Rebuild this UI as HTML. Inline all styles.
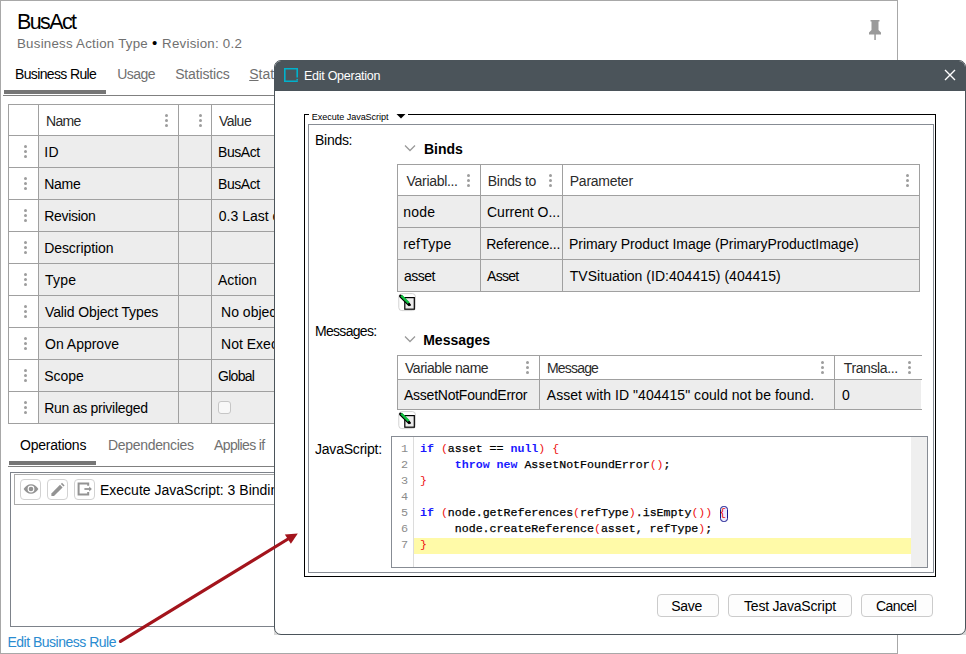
<!DOCTYPE html>
<html><head><meta charset="utf-8"><style>
*{box-sizing:border-box;margin:0;padding:0}
html,body{width:966px;height:654px;overflow:hidden;background:#fff}
body{position:relative;font-family:"Liberation Sans",sans-serif;color:#000}
.a{position:absolute}
.t{position:absolute;white-space:nowrap;line-height:1}
.code{position:absolute;font-family:"Liberation Mono",monospace;font-size:11.6px;line-height:16px;white-space:pre;color:#000;-webkit-text-stroke:0.25px currentColor}
.k{color:#1a1aff;font-weight:bold;-webkit-text-stroke:0}
.p{color:#ee1111;-webkit-text-stroke:0}
.ln{position:absolute;font-family:"Liberation Mono",monospace;font-size:11.8px;line-height:16px;color:#8c8c8c;white-space:pre;text-align:right;width:20px}
</style></head><body>
<div class="a" style="left:0px;top:0px;width:898px;height:654px;border:1px solid #a8a8a8;"></div>
<div class="t" style="left:17.00px;top:12.00px;font-size:21.5px;letter-spacing:-1.610px">BusAct</div>
<div class="t" style="left:17.00px;top:37.00px;font-size:13.3px;letter-spacing:0.240px;color:#707070">Business Action Type <span style="color:#000;font-size:15px;letter-spacing:1px;line-height:0">&#8226;</span> Revision: 0.2</div>
<svg class="a" style="left:866px;top:18px" width="18" height="24" viewBox="0 0 18 24">
<path d="M4.5 2h9v1.5h-1v8.5l2.5 2.5v2h-12v-2l2.5-2.5v-8.5h-1z" fill="#9a9a9a"/>
<rect x="8.3" y="15" width="1.5" height="7" fill="#9a9a9a"/></svg>
<div class="t" style="left:15.00px;top:67.00px;font-size:14px;letter-spacing:-0.642px">Business Rule</div>
<div class="t" style="left:117.20px;top:67.00px;font-size:14px;letter-spacing:-0.525px;color:#707070">Usage</div>
<div class="t" style="left:175.20px;top:67.00px;font-size:14px;letter-spacing:-0.156px;color:#707070">Statistics</div>
<div class="t" style="left:249.20px;top:67.00px;font-size:14px;letter-spacing:0.000px;color:#707070"><u>S</u>tatus</div>
<div class="a" style="left:4px;top:90px;width:102px;height:4px;background:#767676;"></div>
<div class="a" style="left:3px;top:95px;width:894px;height:1px;background:#808080;"></div>
<div class="a" style="left:39px;top:136px;width:261px;height:31px;background:#ededed;"></div>
<div class="a" style="left:39px;top:168px;width:261px;height:31px;background:#ededed;"></div>
<div class="a" style="left:39px;top:200px;width:261px;height:31px;background:#ededed;"></div>
<div class="a" style="left:39px;top:232px;width:261px;height:31px;background:#ededed;"></div>
<div class="a" style="left:39px;top:264px;width:261px;height:31px;background:#ededed;"></div>
<div class="a" style="left:39px;top:296px;width:261px;height:31px;background:#ededed;"></div>
<div class="a" style="left:39px;top:328px;width:261px;height:31px;background:#ededed;"></div>
<div class="a" style="left:39px;top:360px;width:261px;height:31px;background:#ededed;"></div>
<div class="a" style="left:39px;top:392px;width:261px;height:31px;background:#ededed;"></div>
<div class="a" style="left:8px;top:104px;width:293px;height:1px;background:#a0a0a0;"></div>
<div class="a" style="left:8px;top:135px;width:293px;height:1px;background:#a0a0a0;"></div>
<div class="a" style="left:8px;top:167px;width:293px;height:1px;background:#a0a0a0;"></div>
<div class="a" style="left:8px;top:199px;width:293px;height:1px;background:#a0a0a0;"></div>
<div class="a" style="left:8px;top:231px;width:293px;height:1px;background:#a0a0a0;"></div>
<div class="a" style="left:8px;top:263px;width:293px;height:1px;background:#a0a0a0;"></div>
<div class="a" style="left:8px;top:295px;width:293px;height:1px;background:#a0a0a0;"></div>
<div class="a" style="left:8px;top:327px;width:293px;height:1px;background:#a0a0a0;"></div>
<div class="a" style="left:8px;top:359px;width:293px;height:1px;background:#a0a0a0;"></div>
<div class="a" style="left:8px;top:391px;width:293px;height:1px;background:#a0a0a0;"></div>
<div class="a" style="left:8px;top:423px;width:293px;height:1px;background:#a0a0a0;"></div>
<div class="a" style="left:8px;top:104px;width:1px;height:320px;background:#a0a0a0;"></div>
<div class="a" style="left:38px;top:104px;width:1px;height:320px;background:#a0a0a0;"></div>
<div class="a" style="left:178px;top:104px;width:1px;height:320px;background:#a0a0a0;"></div>
<div class="a" style="left:211px;top:104px;width:1px;height:320px;background:#a0a0a0;"></div>
<div class="t" style="left:46.00px;top:114.00px;font-size:14px;letter-spacing:-0.700px;color:#2b2b2b">Name</div>
<div class="a" style="left:165px;top:114px;width:3px;height:3px;border-radius:50%;background:#9d9d9d"></div>
<div class="a" style="left:165px;top:119px;width:3px;height:3px;border-radius:50%;background:#9d9d9d"></div>
<div class="a" style="left:165px;top:124px;width:3px;height:3px;border-radius:50%;background:#9d9d9d"></div>
<div class="a" style="left:199px;top:114px;width:3px;height:3px;border-radius:50%;background:#9d9d9d"></div>
<div class="a" style="left:199px;top:119px;width:3px;height:3px;border-radius:50%;background:#9d9d9d"></div>
<div class="a" style="left:199px;top:124px;width:3px;height:3px;border-radius:50%;background:#9d9d9d"></div>
<div class="t" style="left:219.00px;top:114.00px;font-size:14px;letter-spacing:-0.525px;color:#2b2b2b">Value</div>
<div class="a" style="left:24px;top:145px;width:3px;height:3px;border-radius:50%;background:#9d9d9d"></div>
<div class="a" style="left:24px;top:150px;width:3px;height:3px;border-radius:50%;background:#9d9d9d"></div>
<div class="a" style="left:24px;top:155px;width:3px;height:3px;border-radius:50%;background:#9d9d9d"></div>
<div class="t" style="left:44.20px;top:145.00px;font-size:14px;letter-spacing:0.500px">ID</div>
<div class="t" style="left:218.00px;top:145.00px;font-size:14px;letter-spacing:-0.420px">BusAct</div>
<div class="a" style="left:24px;top:177px;width:3px;height:3px;border-radius:50%;background:#9d9d9d"></div>
<div class="a" style="left:24px;top:182px;width:3px;height:3px;border-radius:50%;background:#9d9d9d"></div>
<div class="a" style="left:24px;top:187px;width:3px;height:3px;border-radius:50%;background:#9d9d9d"></div>
<div class="t" style="left:44.20px;top:177.00px;font-size:14px;letter-spacing:-0.233px">Name</div>
<div class="t" style="left:218.00px;top:177.00px;font-size:14px;letter-spacing:-0.420px">BusAct</div>
<div class="a" style="left:24px;top:209px;width:3px;height:3px;border-radius:50%;background:#9d9d9d"></div>
<div class="a" style="left:24px;top:214px;width:3px;height:3px;border-radius:50%;background:#9d9d9d"></div>
<div class="a" style="left:24px;top:219px;width:3px;height:3px;border-radius:50%;background:#9d9d9d"></div>
<div class="t" style="left:44.20px;top:209.00px;font-size:14px;letter-spacing:-0.300px">Revision</div>
<div class="t" style="left:218.80px;top:209.00px;font-size:14px;letter-spacing:0.000px">0.3 Last edited</div>
<div class="a" style="left:24px;top:241px;width:3px;height:3px;border-radius:50%;background:#9d9d9d"></div>
<div class="a" style="left:24px;top:246px;width:3px;height:3px;border-radius:50%;background:#9d9d9d"></div>
<div class="a" style="left:24px;top:251px;width:3px;height:3px;border-radius:50%;background:#9d9d9d"></div>
<div class="t" style="left:44.20px;top:241.00px;font-size:14px;letter-spacing:-0.070px">Description</div>
<div class="a" style="left:24px;top:273px;width:3px;height:3px;border-radius:50%;background:#9d9d9d"></div>
<div class="a" style="left:24px;top:278px;width:3px;height:3px;border-radius:50%;background:#9d9d9d"></div>
<div class="a" style="left:24px;top:283px;width:3px;height:3px;border-radius:50%;background:#9d9d9d"></div>
<div class="t" style="left:45.00px;top:273.00px;font-size:14px;letter-spacing:0.233px">Type</div>
<div class="t" style="left:218.00px;top:273.00px;font-size:14px;letter-spacing:0.000px">Action</div>
<div class="a" style="left:24px;top:305px;width:3px;height:3px;border-radius:50%;background:#9d9d9d"></div>
<div class="a" style="left:24px;top:310px;width:3px;height:3px;border-radius:50%;background:#9d9d9d"></div>
<div class="a" style="left:24px;top:315px;width:3px;height:3px;border-radius:50%;background:#9d9d9d"></div>
<div class="t" style="left:45.00px;top:305.00px;font-size:14px;letter-spacing:-0.124px">Valid Object Types</div>
<div class="t" style="left:217.20px;top:305.00px;font-size:14px;letter-spacing:0.000px">&nbsp;No objects</div>
<div class="a" style="left:24px;top:337px;width:3px;height:3px;border-radius:50%;background:#9d9d9d"></div>
<div class="a" style="left:24px;top:342px;width:3px;height:3px;border-radius:50%;background:#9d9d9d"></div>
<div class="a" style="left:24px;top:347px;width:3px;height:3px;border-radius:50%;background:#9d9d9d"></div>
<div class="t" style="left:45.00px;top:337.00px;font-size:14px;letter-spacing:0.000px">On Approve</div>
<div class="t" style="left:217.20px;top:337.00px;font-size:14px;letter-spacing:0.000px">&nbsp;Not Executed</div>
<div class="a" style="left:24px;top:369px;width:3px;height:3px;border-radius:50%;background:#9d9d9d"></div>
<div class="a" style="left:24px;top:374px;width:3px;height:3px;border-radius:50%;background:#9d9d9d"></div>
<div class="a" style="left:24px;top:379px;width:3px;height:3px;border-radius:50%;background:#9d9d9d"></div>
<div class="t" style="left:44.20px;top:369.00px;font-size:14px;letter-spacing:0.000px">Scope</div>
<div class="t" style="left:218.00px;top:369.00px;font-size:14px;letter-spacing:-0.700px">Global</div>
<div class="a" style="left:24px;top:401px;width:3px;height:3px;border-radius:50%;background:#9d9d9d"></div>
<div class="a" style="left:24px;top:406px;width:3px;height:3px;border-radius:50%;background:#9d9d9d"></div>
<div class="a" style="left:24px;top:411px;width:3px;height:3px;border-radius:50%;background:#9d9d9d"></div>
<div class="t" style="left:44.20px;top:401.00px;font-size:14px;letter-spacing:-0.263px">Run as privileged</div>
<div class="a" style="left:218px;top:401px;width:13px;height:13px;border:1px solid #c6c6c6;border-radius:3px;background:#f8f8f8"></div>
<div class="t" style="left:20.00px;top:438.00px;font-size:14px;letter-spacing:-0.233px">Operations</div>
<div class="t" style="left:108.00px;top:438.00px;font-size:14px;letter-spacing:-0.318px;color:#707070">Dependencies</div>
<div class="t" style="left:214.00px;top:438.00px;font-size:14px;letter-spacing:-0.622px;color:#707070">Applies if</div>
<div class="a" style="left:9px;top:461px;width:87px;height:4px;background:#767676;"></div>
<div class="a" style="left:8px;top:466px;width:293px;height:1px;background:#808080;"></div>
<div class="a" style="left:10px;top:472px;width:291px;height:155px;border:1px solid #7d828a;"></div>
<div class="a" style="left:14px;top:474px;width:287px;height:31px;border:1px solid #ababab;"></div>
<div class="a" style="left:20px;top:479px;width:21px;height:21px;border:1px solid #d2d2d2;border-radius:4px"></div>
<div class="a" style="left:47px;top:479px;width:21px;height:21px;border:1px solid #d2d2d2;border-radius:4px"></div>
<div class="a" style="left:74px;top:479px;width:21px;height:21px;border:1px solid #d2d2d2;border-radius:4px"></div>
<svg class="a" style="left:21px;top:480px" width="20" height="20" viewBox="0 0 20 20">
<path d="M2.6 9C4.6 5.8 7.1 4.2 10 4.2s5.4 1.6 7.4 4.8C15.4 12.2 12.9 13.8 10 13.8S4.6 12.2 2.6 9z" fill="#939393"/>
<circle cx="10" cy="9" r="3.4" fill="#fff"/><circle cx="10" cy="9" r="2.3" fill="#939393"/></svg>
<svg class="a" style="left:48px;top:480px" width="20" height="20" viewBox="0 0 20 20">
<path d="M3.4 13.4L12 4.8 14.6 7.4 6 16 3.4 16z" fill="#939393"/><path d="M12.9 3.9L14 2.8 16.6 5.4 15.5 6.5z" fill="#939393"/></svg>
<svg class="a" style="left:75px;top:480px" width="20" height="20" viewBox="0 0 20 20">
<path d="M13.2 5.8V3.4H3.6v11.2h9.6V11.9" fill="none" stroke="#939393" stroke-width="2"/>
<path d="M9.4 9h5.6" stroke="#939393" stroke-width="1.8"/><path d="M14.2 6.4L16.9 9l-2.7 2.6z" fill="#939393"/></svg>
<div class="t" style="left:100.00px;top:483.00px;font-size:14px;letter-spacing:0.000px">Execute JavaScript: 3 Bindings</div>
<div class="t" style="left:7.40px;top:635.00px;font-size:14px;letter-spacing:-0.494px;color:#2a8bd0">Edit Business Rule</div>
<div class="a" style="left:274px;top:627px;width:8px;height:8px;background:#d8d8d8;"></div>
<div class="a" style="left:958px;top:627px;width:8px;height:8px;background:#d8d8d8;"></div>
<div class="a" style="left:274px;top:60px;width:692px;height:575px;border:1px solid #4b545a;border-radius:7px;background:#fff;overflow:hidden"><div class="a" style="left:0;top:0;width:692px;height:30px;background:#4b545a"></div></div>
<svg class="a" style="left:283px;top:67px" width="17" height="17" viewBox="0 0 17 17">
<path d="M14.2 10.6V1.8H1.8V14.2H14.8" fill="none" stroke="#00b2cc" stroke-width="1.6"/>
<rect x="13.4" y="11.9" width="1.6" height="1.5" fill="#00b2cc"/></svg>
<div class="t" style="left:304.00px;top:70.00px;font-size:12.5px;letter-spacing:-0.269px;color:#fff">Edit Operation</div>
<svg class="a" style="left:943px;top:68px" width="14" height="14" viewBox="0 0 14 14">
<path d="M2 2L12 12M12 2L2 12" stroke="#fff" stroke-width="1.4"/></svg>
<div class="a" style="left:304px;top:114px;width:632px;height:463px;border:1px solid #000;"></div>
<div class="a" style="left:309px;top:110px;width:99px;height:8px;background:#fff;"></div>
<div class="t" style="left:311.80px;top:113.00px;font-size:9.05px;letter-spacing:-0.041px">Execute JavaScript</div>
<svg class="a" style="left:396px;top:114px" width="10" height="5" viewBox="0 0 10 5"><path d="M0.5 0h9L5 4.5z" fill="#000"/></svg>
<div class="a" style="left:308px;top:124px;width:626px;height:449px;border:1px solid #878c94;"></div>
<div class="t" style="left:315.00px;top:133.00px;font-size:14px;letter-spacing:-0.280px">Binds:</div>
<svg class="a" style="left:404px;top:144px" width="12" height="8" viewBox="0 0 12 8"><path d="M1 1.5L6 6.5 11 1.5" fill="none" stroke="#9a9a9a" stroke-width="1.3"/></svg>
<div class="t" style="left:424.00px;top:142.00px;font-size:14px;letter-spacing:0.000px;font-weight:bold">Binds</div>
<div class="a" style="left:398px;top:196px;width:521px;height:31px;background:#ededed;"></div>
<div class="a" style="left:398px;top:228px;width:521px;height:31px;background:#ededed;"></div>
<div class="a" style="left:398px;top:260px;width:521px;height:31px;background:#ededed;"></div>
<div class="a" style="left:397px;top:164px;width:523px;height:1px;background:#a0a0a0;"></div>
<div class="a" style="left:397px;top:195px;width:523px;height:1px;background:#a0a0a0;"></div>
<div class="a" style="left:397px;top:227px;width:523px;height:1px;background:#a0a0a0;"></div>
<div class="a" style="left:397px;top:259px;width:523px;height:1px;background:#a0a0a0;"></div>
<div class="a" style="left:397px;top:291px;width:523px;height:1px;background:#a0a0a0;"></div>
<div class="a" style="left:397px;top:164px;width:1px;height:128px;background:#a0a0a0;"></div>
<div class="a" style="left:480px;top:164px;width:1px;height:128px;background:#a0a0a0;"></div>
<div class="a" style="left:562px;top:164px;width:1px;height:128px;background:#a0a0a0;"></div>
<div class="a" style="left:919px;top:164px;width:1px;height:128px;background:#a0a0a0;"></div>
<div class="t" style="left:406.60px;top:174.00px;font-size:14px;letter-spacing:-0.311px;color:#2b2b2b">Variabl...</div>
<div class="a" style="left:467px;top:174px;width:3px;height:3px;border-radius:50%;background:#9d9d9d"></div>
<div class="a" style="left:467px;top:179px;width:3px;height:3px;border-radius:50%;background:#9d9d9d"></div>
<div class="a" style="left:467px;top:184px;width:3px;height:3px;border-radius:50%;background:#9d9d9d"></div>
<div class="t" style="left:487.80px;top:174.00px;font-size:14px;letter-spacing:-0.300px;color:#2b2b2b">Binds to</div>
<div class="a" style="left:549px;top:174px;width:3px;height:3px;border-radius:50%;background:#9d9d9d"></div>
<div class="a" style="left:549px;top:179px;width:3px;height:3px;border-radius:50%;background:#9d9d9d"></div>
<div class="a" style="left:549px;top:184px;width:3px;height:3px;border-radius:50%;background:#9d9d9d"></div>
<div class="t" style="left:569.80px;top:174.00px;font-size:14px;letter-spacing:-0.262px;color:#2b2b2b">Parameter</div>
<div class="a" style="left:906px;top:174px;width:3px;height:3px;border-radius:50%;background:#9d9d9d"></div>
<div class="a" style="left:906px;top:179px;width:3px;height:3px;border-radius:50%;background:#9d9d9d"></div>
<div class="a" style="left:906px;top:184px;width:3px;height:3px;border-radius:50%;background:#9d9d9d"></div>
<div class="t" style="left:403.20px;top:205.00px;font-size:14px;letter-spacing:0.233px">node</div>
<div class="t" style="left:487.00px;top:205.00px;font-size:14px;letter-spacing:0.000px">Current O...</div>
<div class="t" style="left:403.20px;top:237.00px;font-size:14px;letter-spacing:0.233px">refType</div>
<div class="t" style="left:486.20px;top:237.00px;font-size:14px;letter-spacing:-0.191px">Reference...</div>
<div class="t" style="left:569.00px;top:237.00px;font-size:14px;letter-spacing:-0.050px">Primary Product Image (PrimaryProductImage)</div>
<div class="t" style="left:404.00px;top:269.00px;font-size:14px;letter-spacing:-0.525px">asset</div>
<div class="t" style="left:487.00px;top:269.00px;font-size:14px;letter-spacing:-0.700px">Asset</div>
<div class="t" style="left:569.80px;top:269.00px;font-size:14px;letter-spacing:0.023px">TVSituation (ID:404415) (404415)</div>
<svg class="a" style="left:398px;top:293px" width="19" height="19" viewBox="0 0 19 19">
<rect x="0.8" y="0.6" width="16.6" height="17" rx="3" fill="#fff" stroke="#d2d2d2"/>
<rect x="6.8" y="4.6" width="9.5" height="11.6" fill="#ececec" stroke="#000" stroke-width="1.2"/>
<path d="M2.6 3.1L11 11.5" stroke="#000" stroke-width="3.1" stroke-linecap="round"/>
<path d="M3.2 2.6L10.8 10.2" stroke="#10c040" stroke-width="2.4"/>
<path d="M10.5 10.5L12.6 12.6" stroke="#000" stroke-width="1.4"/></svg>
<div class="t" style="left:315.00px;top:324.00px;font-size:14px;letter-spacing:-0.700px">Messages:</div>
<svg class="a" style="left:404px;top:335px" width="12" height="8" viewBox="0 0 12 8"><path d="M1 1.5L6 6.5 11 1.5" fill="none" stroke="#9a9a9a" stroke-width="1.3"/></svg>
<div class="t" style="left:423.20px;top:333.00px;font-size:14px;letter-spacing:0.000px;font-weight:bold">Messages</div>
<div class="a" style="left:398px;top:380px;width:523px;height:29px;background:#ededed;"></div>
<div class="a" style="left:397px;top:355px;width:525px;height:1px;background:#a0a0a0;"></div>
<div class="a" style="left:397px;top:379px;width:525px;height:1px;background:#a0a0a0;"></div>
<div class="a" style="left:397px;top:409px;width:525px;height:1px;background:#a0a0a0;"></div>
<div class="a" style="left:397px;top:355px;width:1px;height:55px;background:#a0a0a0;"></div>
<div class="a" style="left:539px;top:355px;width:1px;height:55px;background:#a0a0a0;"></div>
<div class="a" style="left:834px;top:355px;width:1px;height:55px;background:#a0a0a0;"></div>
<div class="t" style="left:405.00px;top:361.00px;font-size:14px;letter-spacing:-0.467px;color:#2b2b2b">Variable name</div>
<div class="a" style="left:526px;top:361px;width:3px;height:3px;border-radius:50%;background:#9d9d9d"></div>
<div class="a" style="left:526px;top:366px;width:3px;height:3px;border-radius:50%;background:#9d9d9d"></div>
<div class="a" style="left:526px;top:371px;width:3px;height:3px;border-radius:50%;background:#9d9d9d"></div>
<div class="t" style="left:547.00px;top:361.00px;font-size:14px;letter-spacing:-0.817px;color:#2b2b2b">Message</div>
<div class="a" style="left:821px;top:361px;width:3px;height:3px;border-radius:50%;background:#9d9d9d"></div>
<div class="a" style="left:821px;top:366px;width:3px;height:3px;border-radius:50%;background:#9d9d9d"></div>
<div class="a" style="left:821px;top:371px;width:3px;height:3px;border-radius:50%;background:#9d9d9d"></div>
<div class="t" style="left:843.80px;top:361.00px;font-size:14px;letter-spacing:-0.389px;color:#2b2b2b">Transla...</div>
<div class="a" style="left:908px;top:361px;width:3px;height:3px;border-radius:50%;background:#9d9d9d"></div>
<div class="a" style="left:908px;top:366px;width:3px;height:3px;border-radius:50%;background:#9d9d9d"></div>
<div class="a" style="left:908px;top:371px;width:3px;height:3px;border-radius:50%;background:#9d9d9d"></div>
<div class="t" style="left:404.00px;top:388.00px;font-size:14px;letter-spacing:-0.247px">AssetNotFoundError</div>
<div class="t" style="left:546.80px;top:388.00px;font-size:14px;letter-spacing:0.051px">Asset with ID &quot;404415&quot; could not be found.</div>
<div class="t" style="left:842.00px;top:388.00px;font-size:14px;letter-spacing:0.000px">0</div>
<svg class="a" style="left:398px;top:411px" width="19" height="19" viewBox="0 0 19 19">
<rect x="0.8" y="0.6" width="16.6" height="17" rx="3" fill="#fff" stroke="#d2d2d2"/>
<rect x="6.8" y="4.6" width="9.5" height="11.6" fill="#ececec" stroke="#000" stroke-width="1.2"/>
<path d="M2.6 3.1L11 11.5" stroke="#000" stroke-width="3.1" stroke-linecap="round"/>
<path d="M3.2 2.6L10.8 10.2" stroke="#10c040" stroke-width="2.4"/>
<path d="M10.5 10.5L12.6 12.6" stroke="#000" stroke-width="1.4"/></svg>
<div class="t" style="left:315.00px;top:442.00px;font-size:14px;letter-spacing:-0.210px">JavaScript:</div>
<div class="a" style="left:391px;top:436px;width:537px;height:132px;border:1px solid #878c94;"></div>
<div class="a" style="left:911px;top:437px;width:16px;height:130px;background:#efefef;"></div>
<div class="a" style="left:413px;top:437px;width:1px;height:130px;background:#dcdcdc;"></div>
<div class="a" style="left:414px;top:538px;width:497px;height:16px;background:#fffaa8;"></div>
<div class="a" style="left:720px;top:506px;width:8px;height:16px;border:1.2px solid #14148c;border-radius:3.5px;background:#ececff"></div>
<div class="ln" style="left:388px;top:440.5px">1</div>
<div class="code" style="left:420px;top:441px"><span class="k">if</span> <span class="p">(</span>asset == <span class="k">null</span><span class="p">)</span> <span class="p">{</span></div>
<div class="ln" style="left:388px;top:456.5px">2</div>
<div class="code" style="left:420px;top:457px">     <span class="k">throw</span> <span class="k">new</span> AssetNotFoundError<span class="p">()</span>;</div>
<div class="ln" style="left:388px;top:472.5px">3</div>
<div class="code" style="left:420px;top:473px"><span class="p">}</span></div>
<div class="ln" style="left:388px;top:488.5px">4</div>
<div class="code" style="left:420px;top:489px"></div>
<div class="ln" style="left:388px;top:504.5px">5</div>
<div class="code" style="left:420px;top:505px"><span class="k">if</span> <span class="p">(</span>node.getReferences<span class="p">(</span>refType<span class="p">)</span>.isEmpty<span class="p">())</span> <span class="p">{</span></div>
<div class="ln" style="left:388px;top:520.5px">6</div>
<div class="code" style="left:420px;top:521px">     node.createReference<span class="p">(</span>asset, refType<span class="p">)</span>;</div>
<div class="ln" style="left:388px;top:536.5px">7</div>
<div class="code" style="left:420px;top:537px"><span class="p">}</span></div>
<div class="a" style="left:657px;top:594px;width:62px;height:23px;border:1px solid #cbcbcb;border-radius:4px;background:#fdfdfd"></div>
<div class="t" style="left:671.20px;top:599.00px;font-size:14px;letter-spacing:-0.233px">Save</div>
<div class="a" style="left:728px;top:594px;width:124px;height:23px;border:1px solid #cbcbcb;border-radius:4px;background:#fdfdfd"></div>
<div class="t" style="left:744.00px;top:599.00px;font-size:14px;letter-spacing:-0.200px">Test JavaScript</div>
<div class="a" style="left:861px;top:594px;width:72px;height:23px;border:1px solid #cbcbcb;border-radius:4px;background:#fdfdfd"></div>
<div class="t" style="left:876.00px;top:599.00px;font-size:14px;letter-spacing:-0.560px">Cancel</div>
<svg class="a" style="left:0;top:0" width="966" height="654" viewBox="0 0 966 654">
<path d="M120.5 641.3L288 539" stroke="#a3141c" stroke-width="3.2" stroke-linecap="round"/>
<path d="M297.8 533.4L284.8 534.4L290.9 543.7z" fill="#a3141c"/></svg>
</body></html>
